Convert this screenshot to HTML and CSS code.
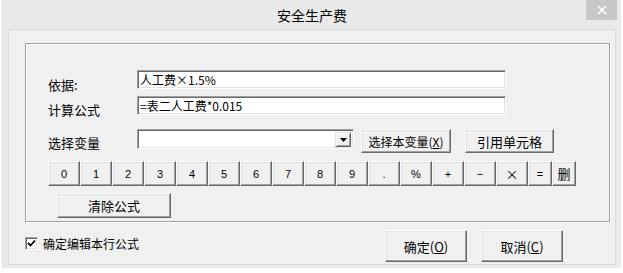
FILE: index.html
```html
<!DOCTYPE html>
<html lang="zh">
<head>
<meta charset="utf-8">
<title>安全生产费</title>
<link rel="stylesheet" href="styles.css">
</head>
<body>
<div class="window">
  <div class="titlebar">
    <span class="spacer"></span>
    <span class="title">安全生产费</span>
    <span class="close"><svg width="10" height="10" viewBox="0 0 10 10"><path d="M1 1L9 9M9 1L1 9" stroke="#fff" stroke-width="1.6"/></svg></span>
  </div>
  <div class="panel">
    <div class="group">
      <div class="row r1">
        <span class="label l1">依据:</span>
        <div class="field">人工费×1.5%</div>
      </div>
      <div class="row r2">
        <span class="label l2">计算公式</span>
        <div class="field">=表二人工费*0.015</div>
      </div>
      <div class="row r3">
        <span class="label l3">选择变量</span>
        <div class="combo"><span class="combo-btn"><svg width="7" height="4" viewBox="0 0 7 4"><path d="M0 0H7L3.5 4Z" fill="#000"/></svg></span></div>
        <span class="btn b-var">选择本变量(<u>X</u>)</span>
        <span class="btn b-cell">引用单元格</span>
      </div>
      <div class="keys">
        <span class="key">0</span><span class="key">1</span><span class="key">2</span><span class="key">3</span><span class="key">4</span><span class="key">5</span><span class="key">6</span><span class="key">7</span><span class="key">8</span><span class="key">9</span><span class="key">.</span><span class="key">%</span><span class="key">+</span><span class="key">−</span><span class="key cjk">×</span><span class="key narrow">=</span><span class="key narrow cjk">删</span>
      </div>
      <span class="btn b-clear">清除公式</span>
    </div>
    <div class="footer">
      <span class="check"><span class="box"><svg width="9" height="9" viewBox="0 0 9 9"><path d="M1 4L3.5 6.5L8 1.5" stroke="#000" stroke-width="1.8" fill="none"/></svg></span>确定编辑本行公式</span>
      <span class="btn b-ok">确定(<u>O</u>)</span>
      <span class="btn b-cancel">取消(<u>C</u>)</span>
    </div>
  </div>
</div>
</body>
</html>
```
FILE: styles.css
```css
html, body {
  margin: 0;
  padding: 0;
  background: #ffffff;
}
body {
  font-family: "Noto Sans CJK SC", "Liberation Sans", sans-serif;
  font-size: 12px;
  color: #000;
  width: 623px;
  height: 273px;
  overflow: hidden;
}
.window {
  margin-left: 2px;
  width: 619px;
  height: 268px;
  background: #e9e9e9;
  box-sizing: border-box;
  border-left: 1px solid #e0e0e0;
  padding: 0 5px 0 5px;
}
.titlebar {
  height: 29px;
  display: grid;
  grid-template-columns: 1fr auto 1fr;
  align-items: start;
}
.title {
  font-size: 14px;
  line-height: 14px;
  padding-top: 8px;
  color: #000;
}
.close {
  justify-self: end;
  margin-right: -1px;
  width: 31px;
  height: 20px;
  background: #c7c7c7;
  display: flex;
  align-items: center;
  justify-content: center;
}
.panel {
  width: 608px;
  height: 236px;
  box-sizing: border-box;
  border: 1px solid #dadada;
  background: #f0f0f0;
  padding: 13px 0 0 16px;
}
.group {
  width: 585px;
  height: 179px;
  box-sizing: border-box;
  border: 1px solid #a0a0a0;
  box-shadow: inset 1px 1px #ffffff, 1px 1px #ffffff;
  display: flex;
  flex-direction: column;
  align-items: flex-start;
}
.row {
  display: flex;
  align-items: flex-start;
}
.r1 { margin-top: 26px; }
.r2 { margin-top: 5px; }
.r3 { margin-top: 13px; }
.label {
  width: 89px;
  padding-left: 22px;
  line-height: 12px;
  font-size: 13px;
}
.l1 { padding-top: 9px; }
.l2 { padding-top: 8px; }
.l3 { padding-top: 8px; }
.field, .combo {
  box-sizing: border-box;
  background: #fff;
  border-top: 1px solid #a0a0a0;
  border-left: 1px solid #a0a0a0;
  border-right: 1px solid #ffffff;
  border-bottom: 1px solid #ffffff;
  box-shadow: inset 1px 1px #696969, inset -1px -1px #e3e3e3;
}
.field {
  width: 369px;
  height: 19px;
  line-height: 17px;
  padding-left: 2px;
  white-space: nowrap;
}
.combo {
  width: 217px;
  height: 20px;
  display: flex;
  justify-content: flex-end;
  padding: 2px 2px 2px 0;
}
.combo-btn {
  width: 16px;
  height: 15px;
  box-sizing: border-box;
  background: #f0f0f0;
  border-top: 1px solid #e3e3e3;
  border-left: 1px solid #e3e3e3;
  border-right: 1px solid #696969;
  border-bottom: 1px solid #696969;
  box-shadow: inset 1px 1px #fff, inset -1px -1px #a0a0a0;
  display: flex;
  align-items: center;
  justify-content: center;
}
.btn, .key {
  box-sizing: border-box;
  background: #f0f0f0;
  border-top: 1px solid #ffffff;
  border-left: 1px solid #ffffff;
  border-right: 1px solid #696969;
  border-bottom: 1px solid #696969;
  box-shadow: inset -1px -1px #a0a0a0, inset 1px 1px #e3e3e3;
  display: flex;
  align-items: center;
  justify-content: center;
  white-space: nowrap;
}
.btn { font-size: 12px; }
.b-var { margin-left: 7px; width: 90px; height: 24px; }
.b-cell { margin-left: 14px; width: 89px; height: 24px; font-size: 13px; }
.keys {
  margin-top: 8px;
  margin-left: 22px;
  display: flex;
}
.key {
  width: 32px;
  height: 25px;
  font-family: "Liberation Sans", sans-serif;
  font-size: 11px;
}
.key.narrow { width: 24px; }
.key.cjk { font-family: "Noto Sans CJK SC", sans-serif; font-size: 13px; }
.b-clear {
  margin-top: 7px;
  margin-left: 31px;
  width: 114px;
  height: 25px;
  font-size: 13px;
}
.footer {
  display: flex;
  align-items: flex-start;
  margin-top: 8px;
  padding-left: 0;
}
.check {
  display: flex;
  align-items: center;
  margin-top: 5px;
  width: 360px;
  font-size: 12px;
}
.box {
  width: 13px;
  height: 13px;
  box-sizing: border-box;
  background: #fff;
  border-top: 1px solid #a0a0a0;
  border-left: 1px solid #a0a0a0;
  border-right: 1px solid #fff;
  border-bottom: 1px solid #fff;
  box-shadow: inset 1px 1px #696969, inset -1px -1px #e3e3e3;
  display: flex;
  align-items: center;
  justify-content: center;
  margin-right: 5px;
}
.b-ok { width: 82px; height: 32px; font-size: 13px; }
.b-cancel { margin-left: 14px; width: 82px; height: 32px; font-size: 13px; }
u { text-decoration: underline; }
```
